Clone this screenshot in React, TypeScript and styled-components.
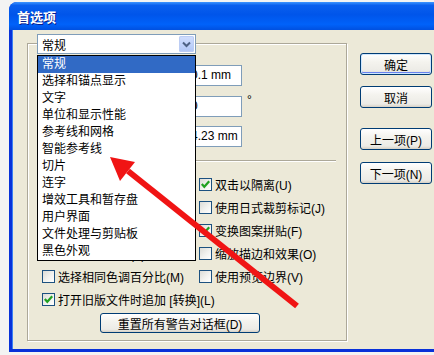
import React from "react";
import styled, { createGlobalStyle, css } from "styled-components";

const GlobalStyle = createGlobalStyle`
  html, body { margin: 0; padding: 0; }
  body {
    background: #f3f3f3;
    font-family: "Liberation Sans", "Noto Sans CJK SC", sans-serif;
    font-size: 12px;
    color: #000;
  }
`;

const pages = [
  "常规",
  "选择和锚点显示",
  "文字",
  "单位和显示性能",
  "参考线和网格",
  "智能参考线",
  "切片",
  "连字",
  "增效工具和暂存盘",
  "用户界面",
  "文件处理与剪贴板",
  "黑色外观",
];

const fields = [
  { label: "键盘增量(K):", value: "0.1 mm" },
  { label: "约束角度(N):", value: "0", unit: "°" },
  { label: "圆角半径(R):", value: "4.23 mm" },
];

const options = [
  { label: "停用自动添加/删除(B)", checked: false },
  { label: "双击以隔离(U)", checked: true },
  { label: "使用精确光标(E)", checked: false },
  { label: "使用日式裁剪标记(J)", checked: false },
  { label: "显示工具提示(I)", checked: true },
  { label: "变换图案拼贴(F)", checked: true },
  { label: "消除锯齿图稿(T)", checked: true },
  { label: "缩放描边和效果(O)", checked: false },
  { label: "选择相同色调百分比(M)", checked: false },
  { label: "使用预览边界(V)", checked: false },
];

export default function App() {
  return (
    <Screen>
      <GlobalStyle />
      <Window>
        <TitleBar>首选项</TitleBar>
        <Client>
          <GroupBox>
            <Fields>
              {fields.map((f) => (
                <React.Fragment key={f.label}>
                  <FieldLabel>{f.label}</FieldLabel>
                  <TextInput>{f.value}</TextInput>
                  <Unit>{f.unit}</Unit>
                </React.Fragment>
              ))}
            </Fields>
            <Separator />
            <Options>
              {options.map((o) => (
                <Option key={o.label}>
                  <CheckBox checked={o.checked} />
                  <span>{o.label}</span>
                </Option>
              ))}
              <Option $wide>
                <CheckBox checked />
                <span>打开旧版文件时追加 [转换](L)</span>
              </Option>
            </Options>
            <ResetButton>重置所有警告对话框(D)</ResetButton>

            <Combo>
              <ComboField>常规</ComboField>
              <ComboArrow>
                <svg width="9" height="7" viewBox="0 0 9 7">
                  <polyline points="1,1.5 4.5,5 8,1.5" fill="none" stroke="#4d6185" strokeWidth="2" />
                </svg>
              </ComboArrow>
            </Combo>
            <DropList>
              {pages.map((p, i) => (
                <DropItem key={p} $selected={i === 0}>{p}</DropItem>
              ))}
            </DropList>
          </GroupBox>

          <ButtonColumn>
            <PushButton $default>确定</PushButton>
            <PushButton $gap={11}>取消</PushButton>
            <PushButton $gap={20}>上一项(P)</PushButton>
            <PushButton $gap={12}>下一项(N)</PushButton>
          </ButtonColumn>
        </Client>
      </Window>

      <Annotation width="434" height="355" viewBox="0 0 434 355">
        <line x1="297" y1="306" x2="128" y2="171" stroke="#f01414" strokeWidth="6" />
        <polygon points="110,157 135,162 120,181" fill="#f01414" />
      </Annotation>
    </Screen>
  );
}

const CheckBox = ({ checked }: { checked?: boolean }) => (
  <Box>
    {checked && (
      <svg width="11" height="11" viewBox="0 0 11 11">
        <polyline points="1.8,5 4.3,7.8 9.2,2.3" fill="none" stroke="#21a121" strokeWidth="2.2" />
      </svg>
    )}
  </Box>
);

const Screen = styled.div`
  position: relative;
  width: 434px;
  height: 355px;
  overflow: hidden;
  box-sizing: border-box;
  padding: 2px 0 0 9px;
`;

const Window = styled.div`
  width: 440px;
  height: 350px;
  display: flex;
  flex-direction: column;
  background: #0831d9;
  border-radius: 8px 8px 0 0;
  overflow: hidden;
`;

const TitleBar = styled.div`
  height: 28px;
  flex: none;
  display: flex;
  align-items: center;
  padding-left: 8px;
  color: #fff;
  font-weight: bold;
  font-size: 13px;
  text-shadow: 1px 1px 0 #0a1e8c;
  background: linear-gradient(
    to bottom,
    #3d95ff 0%,
    #0a5fee 12%,
    #0055ea 45%,
    #0062fa 80%,
    #0050e0 100%
  );
`;

const Client = styled.div`
  flex: 1;
  margin: 0 0 3px 3px;
  background: #ece9d8;
  box-shadow: inset 1px 0 0 #3a80f3;
  display: flex;
  padding: 13px 0 0 15px;
  gap: 13px;
`;

const GroupBox = styled.div`
  position: relative;
  width: 320px;
  height: 298px;
  flex: none;
  box-sizing: border-box;
  border: 1px solid #aca899;
  box-shadow: inset 1px 1px 0 #fff, 1px 1px 0 #fff;
  display: flex;
  flex-direction: column;
`;

const Fields = styled.div`
  display: grid;
  grid-template-columns: 147px 53px 20px;
  grid-auto-rows: 21px;
  row-gap: 9.5px;
  padding: 21px 0 0 14px;
  align-items: center;
`;

const FieldLabel = styled.span`
  white-space: nowrap;
`;

const TextInput = styled.div`
  height: 21px;
  box-sizing: border-box;
  border: 1px solid #7f9db9;
  background: #fff;
  padding: 0 0 0 1px;
  line-height: 19px;
  font-size: 12px;
  white-space: nowrap;
  overflow: hidden;
`;

const Unit = styled.span`
  align-self: start;
  padding: 0 0 0 5px;
  font-size: 12px;
  line-height: 9px;
`;

const Separator = styled.div`
  margin: 13px 10px 0 10px;
  border-top: 1px solid #aca899;
  border-bottom: 1px solid #fff;
`;

const Options = styled.div`
  display: grid;
  grid-template-columns: 157px 1fr;
  grid-auto-rows: 23px;
  padding-left: 14px;
  margin-top: 11px;
`;

const Option = styled.label<{ $wide?: boolean }>`
  display: flex;
  align-items: center;
  gap: 3px;
  white-space: nowrap;
  ${(p) => p.$wide && css`grid-column: 1 / -1;`}
`;

const Box = styled.span`
  width: 13px;
  height: 13px;
  flex: none;
  box-sizing: border-box;
  border: 1px solid #1c5180;
  background: linear-gradient(135deg, #dcdcd7 0%, #f2f2ef 55%, #ffffff 100%);
  display: flex;
  align-items: center;
  justify-content: center;
`;

const buttonFace = css`
  box-sizing: border-box;
  border: 1px solid #003c74;
  border-radius: 3px;
  background: linear-gradient(to bottom, #ffffff 0%, #f4f3ee 40%, #ecebe6 85%, #d6d0c5 100%);
  display: flex;
  align-items: center;
  justify-content: center;
  font-size: 12px;
  color: #000;
`;

const ResetButton = styled.div`
  ${buttonFace};
  width: 160px;
  height: 20px;
  margin: 2px 0 0 72px;
`;

const ButtonColumn = styled.div`
  display: flex;
  flex-direction: column;
  padding-top: 10px;
  width: 72px;
`;

const PushButton = styled.div<{ $default?: boolean; $gap?: number }>`
  ${buttonFace};
  height: 22px;
  margin-top: ${(p) => p.$gap ?? 0}px;
  ${(p) =>
    p.$default &&
    css`
      box-shadow: inset 0 0 0 1px #cee7ff, inset 0 -1px 0 1px #6982ee;
    `}
`;

const Combo = styled.div`
  position: absolute;
  left: 9px;
  top: -10px;
  width: 159px;
  height: 20px;
  box-sizing: border-box;
  border: 1px solid #7f9db9;
  background: #fff;
  display: flex;
  align-items: center;
`;

const ComboField = styled.span`
  flex: 1;
  padding-left: 4px;
  font-size: 12px;
`;

const ComboArrow = styled.span`
  width: 15px;
  height: 16px;
  margin-right: 1px;
  border-radius: 2px;
  background: linear-gradient(to bottom, #d1defd 0%, #c1d3fb 50%, #b0c6f6 100%);
  box-shadow: inset 0 0 0 1px #bccdf4;
  display: flex;
  align-items: center;
  justify-content: center;
`;

const DropList = styled.div`
  position: absolute;
  left: 9px;
  top: 11px;
  width: 159px;
  box-sizing: border-box;
  border: 1px solid #000;
  background: #fff;
  z-index: 2;
`;

const DropItem = styled.div<{ $selected?: boolean }>`
  height: 17px;
  line-height: 17px;
  padding-left: 4px;
  font-size: 12px;
  white-space: nowrap;
  ${(p) =>
    p.$selected &&
    css`
      background: #316ac5;
      color: #fff;
    `}
`;

const Annotation = styled.svg`
  position: absolute;
  left: 0;
  top: 0;
  pointer-events: none;
  z-index: 5;
`;
